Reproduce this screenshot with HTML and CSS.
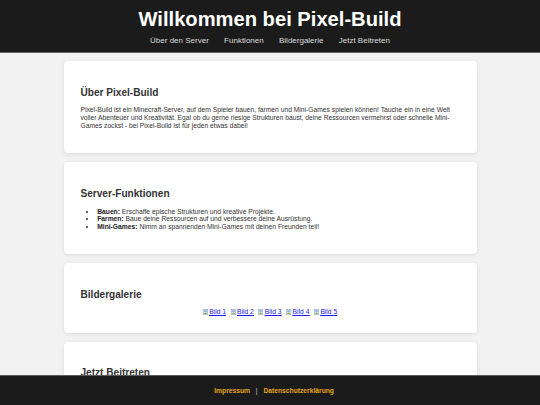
FILE: index.html
```html
<!DOCTYPE html>
<html lang="de">
<head>
<meta charset="utf-8">
<title>Pixel-Build</title>
<link rel="stylesheet" href="styles.css">
</head>
<body>
<header class="site-header">
  <h1 class="site-title">Willkommen bei Pixel-Build</h1>
  <nav class="site-nav">
    <a href="#about">Über den Server</a>
    <a href="#features">Funktionen</a>
    <a href="#gallery">Bildergalerie</a>
    <a href="#join">Jetzt Beitreten</a>
  </nav>
</header>
<main class="content">
  <section class="card" id="about">
    <h2 class="card-title">Über Pixel-Build</h2>
    <p class="card-text">Pixel-Build ist ein Minecraft-Server, auf dem Spieler bauen, farmen und Mini-Games spielen können! Tauche ein in eine Welt voller Abenteuer und Kreativität. Egal ob du gerne riesige Strukturen baust, deine Ressourcen vermehrst oder schnelle Mini-Games zockst - bei Pixel-Build ist für jeden etwas dabei!</p>
  </section>
  <section class="card" id="features">
    <h2 class="card-title">Server-Funktionen</h2>
    <ul class="feature-list">
      <li><strong>Bauen:</strong> Erschaffe epische Strukturen und kreative Projekte.</li>
      <li><strong>Farmen:</strong> Baue deine Ressourcen auf und verbessere deine Ausrüstung.</li>
      <li><strong>Mini-Games:</strong> Nimm an spannenden Mini-Games mit deinen Freunden teil!</li>
    </ul>
  </section>
  <section class="card" id="gallery">
    <h2 class="card-title">Bildergalerie</h2>
    <div class="gallery">
      <a class="pic" href="#"><svg class="broken" viewBox="0 0 5 6" width="5" height="6"><rect x="0.25" y="0.25" width="4.5" height="5.5" fill="#eef3f8" stroke="#8a9aa8" stroke-width="0.5"/><rect x="1" y="1.2" width="3" height="1.6" fill="#7fb0e6"/><path d="M1 4.6 L2.2 3.2 L3.2 4.2 L4 3.6 L4 4.8 L1 4.8Z" fill="#4fa83e"/></svg><span>Bild 1</span></a>
      <a class="pic" href="#"><svg class="broken" viewBox="0 0 5 6" width="5" height="6"><rect x="0.25" y="0.25" width="4.5" height="5.5" fill="#eef3f8" stroke="#8a9aa8" stroke-width="0.5"/><rect x="1" y="1.2" width="3" height="1.6" fill="#7fb0e6"/><path d="M1 4.6 L2.2 3.2 L3.2 4.2 L4 3.6 L4 4.8 L1 4.8Z" fill="#4fa83e"/></svg><span>Bild 2</span></a>
      <a class="pic" href="#"><svg class="broken" viewBox="0 0 5 6" width="5" height="6"><rect x="0.25" y="0.25" width="4.5" height="5.5" fill="#eef3f8" stroke="#8a9aa8" stroke-width="0.5"/><rect x="1" y="1.2" width="3" height="1.6" fill="#7fb0e6"/><path d="M1 4.6 L2.2 3.2 L3.2 4.2 L4 3.6 L4 4.8 L1 4.8Z" fill="#4fa83e"/></svg><span>Bild 3</span></a>
      <a class="pic" href="#"><svg class="broken" viewBox="0 0 5 6" width="5" height="6"><rect x="0.25" y="0.25" width="4.5" height="5.5" fill="#eef3f8" stroke="#8a9aa8" stroke-width="0.5"/><rect x="1" y="1.2" width="3" height="1.6" fill="#7fb0e6"/><path d="M1 4.6 L2.2 3.2 L3.2 4.2 L4 3.6 L4 4.8 L1 4.8Z" fill="#4fa83e"/></svg><span>Bild 4</span></a>
      <a class="pic" href="#"><svg class="broken" viewBox="0 0 5 6" width="5" height="6"><rect x="0.25" y="0.25" width="4.5" height="5.5" fill="#eef3f8" stroke="#8a9aa8" stroke-width="0.5"/><rect x="1" y="1.2" width="3" height="1.6" fill="#7fb0e6"/><path d="M1 4.6 L2.2 3.2 L3.2 4.2 L4 3.6 L4 4.8 L1 4.8Z" fill="#4fa83e"/></svg><span>Bild 5</span></a>
    </div>
  </section>
  <section class="card card-last" id="join">
    <h2 class="card-title">Jetzt Beitreten</h2>
  </section>
</main>
<footer class="site-footer">
  <div class="footer-links"><a href="#">Impressum</a><span class="sep">|</span><a href="#">Datenschutzerklärung</a></div>
</footer>
</body>
</html>
```

FILE: styles.css
```css
* {
  box-sizing: border-box;
}

html, body {
  margin: 0;
  padding: 0;
}

body {
  background: #f2f2f2;
  font-family: "Liberation Sans", Arial, sans-serif;
  font-size: 6.72px;
  color: #333;
}

.site-header {
  background: #1b1b1b;
  color: #fff;
  text-align: center;
  padding: 8px 0 7px;
  border-bottom: 1px solid #6a6a6a;
}

.site-title {
  margin: 0 0 5.4px;
  font-size: 20.16px;
  font-weight: bold;
  line-height: normal;
}

.site-nav {
  display: flex;
  justify-content: center;
  gap: 15.3px;
  font-size: 8px;
  line-height: normal;
}

.site-nav a {
  color: #dcdcdc;
  text-decoration: none;
}

.content {
  width: 413px;
  margin: 0 auto;
  padding: 7.5px 0 40px;
  display: flex;
  flex-direction: column;
  gap: 9px;
}

.card {
  background: #fff;
  border-radius: 4px;
  padding: 17.5px 17px 16px;
  box-shadow: 0 1px 4px rgba(0, 0, 0, 0.1);
}

.card-last {
  min-height: 70px;
}

.card-title {
  margin: 8.3px 0;
  font-size: 10.08px;
  font-weight: bold;
  line-height: normal;
  color: #333;
}

.card-text {
  margin: 6.72px 0;
  line-height: 1.23;
}

.feature-list {
  margin: 6.72px 0;
  padding-left: 16.7px;
  line-height: 1.17;
}

.feature-list strong {
  color: #222;
}

.gallery {
  display: flex;
  justify-content: center;
  gap: 4.6px;
  line-height: 1.3;
}

.pic {
  display: inline-flex;
  align-items: center;
  gap: 1.4px;
  color: #1a1aee;
  text-decoration: underline;
}

.pic span {
  text-decoration: underline;
}

.broken {
  display: block;
}

.site-footer {
  position: fixed;
  left: 0;
  right: 0;
  bottom: 0;
  height: 30px;
  background: #1b1b1b;
  border-top: 1px solid #5a5a5a;
  display: flex;
  align-items: center;
  justify-content: center;
  padding-left: 8.2px;
  font-weight: bold;
  line-height: normal;
}

.footer-links {
  display: flex;
  align-items: baseline;
}

.site-footer a {
  color: #e3a617;
  text-decoration: none;
}

.site-footer .sep {
  color: #cfcfcf;
  font-weight: normal;
  margin: 0 5.8px;
}
```
